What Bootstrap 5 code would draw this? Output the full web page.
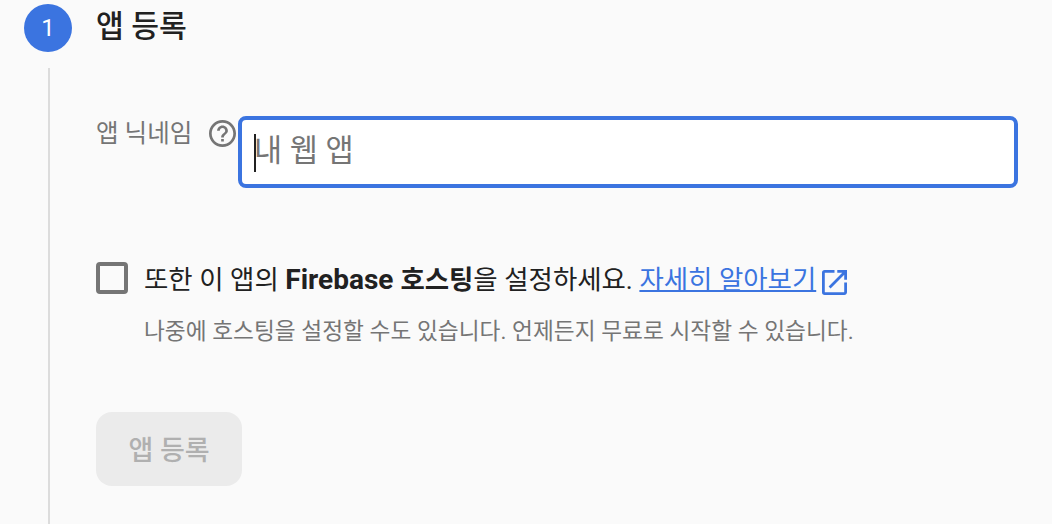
<!DOCTYPE html>
<html lang="ko">
<head>
<meta charset="utf-8">
<meta name="viewport" content="width=device-width, initial-scale=1">
<title>앱 등록</title>
<link href="https://cdn.jsdelivr.net/npm/bootstrap@5.3.0/dist/css/bootstrap.min.css" rel="stylesheet">
<style>
body{background:#fafafa;color:#212121;font-family:Roboto,"Noto Sans CJK KR",sans-serif;overflow:hidden}
.stepper{height:524px;padding-left:24px}
.rail{width:48px;padding-top:4px}
.step-no{width:48px;height:48px;background:#3b74e0;font-size:24px}
.rail-line{width:2px;background:#dcdcdc;margin:16px 0 0 2px}
.step-body{padding-left:24px;width:946px}
.step-title{font-size:30.2px;line-height:40px;padding-top:7px;font-weight:500}
.field{margin-top:69px;height:72px}
.field-label{font-size:24.5px;line-height:36px;color:#757575;width:113px}
.help{width:27px;height:27px;margin:4px 1px 0 0}
.field-input{width:780px;height:72px;border:4px solid #3b74e0;border-radius:8px;padding:0 12px;font-size:30.6px;background:#fff;color:#757575;line-height:61px;margin-left:1px}
.caret{width:2px;height:38px;left:12px;top:14px;background:#212121}
.option{margin-top:72px}
.tick{width:32px;height:32px;border:4px solid #757575;border-radius:4px;margin-top:2px}
.opt-text{font-size:26.45px;line-height:36px;padding-top:2px}
.latin{font-size:28px;line-height:1}
.opt-link{color:#3b74e0;text-decoration-thickness:2px}
.open-icon{width:25px;height:25px;margin:4px 0 0 6px}
.hint{font-size:22.7px;line-height:32px;color:#757575;margin-top:18px}
.go{width:146px;height:74px;border-radius:16px;background:#ebebeb;color:#b0b0b0;font-size:27px;font-weight:500;margin-top:64px}
</style>
<script src="https://cdn.jsdelivr.net/npm/bootstrap@5.3.0/dist/js/bootstrap.bundle.min.js"></script>
</head>
<body>
<main class="stepper d-flex">
  <div class="rail d-flex flex-column align-items-center flex-shrink-0">
    <div class="step-no rounded-circle text-white d-flex align-items-center justify-content-center flex-shrink-0">1</div>
    <div class="rail-line flex-grow-1"></div>
  </div>
  <section class="step-body">
    <h2 class="step-title mb-0">앱 등록</h2>
    <div class="field d-flex">
      <label class="field-label text-nowrap">앱 닉네임</label>
      <svg class="help flex-shrink-0" viewBox="2 2 20 20" fill="#757575"><path d="M11 18h2v-2h-2v2zm1-16C6.480 2 2 6.480 2 12s4.480 10 10 10 10-4.480 10-10S17.520 2 12 2zm0 18c-4.410 0-8-3.590-8-8s3.590-8 8-8 8 3.590 8 8-3.590 8-8 8zm0-14c-2.210 0-4 1.790-4 4h2c0-1.100.9-2 2-2s2 .9 2 2c0 2-3 1.750-3 5h2c0-2.250 3-2.500 3-5 0-2.210-1.790-4-4-4z"/></svg>
      <div class="field-input position-relative flex-shrink-0"><span class="caret position-absolute"></span>내 웹 앱</div>
    </div>
    <div class="option d-flex">
      <span class="tick flex-shrink-0"></span>
      <div class="ps-3">
        <div class="opt-text d-flex align-items-center text-nowrap"><span>또한 이 앱의 <b><span class="latin">Firebase </span>호스팅</b>을 설정하세요. <a class="opt-link" href="#">자세히 알아보기</a></span>
          <svg class="open-icon" viewBox="3 3 18 18" fill="#3b74e0"><path d="M19 19H5V5h7V3H5a2 2 0 0 0-2 2v14a2 2 0 0 0 2 2h14c1.100 0 2-.9 2-2v-7h-2v7zM14 3v2h3.590l-9.830 9.830 1.410 1.410L19 6.410V10h2V3h-7z"/></svg></div>
        <div class="hint text-nowrap">나중에 호스팅을 설정할 수도 있습니다. 언제든지 무료로 시작할 수 있습니다.</div>
      </div>
    </div>
    <button class="go border-0 px-0 pb-0 pt-1 d-block" disabled>앱 등록</button>
  </section>
</main>
</body>
</html>
